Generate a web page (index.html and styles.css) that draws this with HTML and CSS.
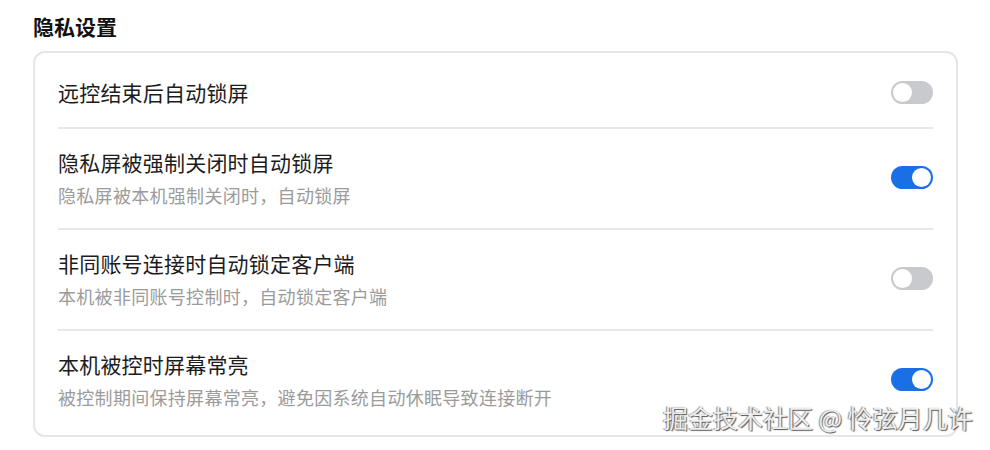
FILE: index.html
```html
<!DOCTYPE html>
<html lang="zh-CN">
<head>
<meta charset="utf-8">
<title>隐私设置</title>
<link rel="stylesheet" href="styles.css">
</head>
<body>
<div class="page">
  <h2 class="section-title">隐私设置</h2>
  <div class="card">
    <div class="row">
      <div class="texts">
        <div class="row-title">远控结束后自动锁屏</div>
      </div>
      <span class="switch"><span class="knob"></span></span>
    </div>
    <div class="row">
      <div class="texts">
        <div class="row-title">隐私屏被强制关闭时自动锁屏</div>
        <div class="row-desc">隐私屏被本机强制关闭时，自动锁屏</div>
      </div>
      <span class="switch on"><span class="knob"></span></span>
    </div>
    <div class="row">
      <div class="texts">
        <div class="row-title">非同账号连接时自动锁定客户端</div>
        <div class="row-desc">本机被非同账号控制时，自动锁定客户端</div>
      </div>
      <span class="switch"><span class="knob"></span></span>
    </div>
    <div class="row">
      <div class="texts">
        <div class="row-title">本机被控时屏幕常亮</div>
        <div class="row-desc">被控制期间保持屏幕常亮，避免因系统自动休眠导致连接断开</div>
      </div>
      <span class="switch on"><span class="knob"></span></span>
    </div>
  </div>
  <div class="watermark">掘金技术社区 @ 怜弦月几许</div>
</div>
</body>
</html>
```
FILE: styles.css
```css
* { box-sizing: border-box; }
html, body {
  margin: 0;
  background: #ffffff;
}
body {
  font-family: "Noto Sans CJK SC", "Noto Sans", sans-serif;
  color: #1e1e1e;
}
.page {
  position: relative;
  width: 990px;
  height: 450px;
  padding: 11px 32px 0 33px;
}
.section-title {
  margin: 0 0 10px;
  font-size: 21px;
  line-height: 30px;
  font-weight: 700;
  color: #111;
}
.card {
  border: 2px solid #e6e6e6;
  border-radius: 12px;
  padding: 6px 23px 5px;
  background: #fff;
}
.row {
  display: flex;
  align-items: center;
  justify-content: space-between;
  padding: 18px 0 20px;
  border-bottom: 2px solid #e8e8e8;
}
.row:last-child { border-bottom: none; }
.row-title {
  font-size: 21px;
  line-height: 30px;
  letter-spacing: 0.2px;
  color: #1c1c1c;
}
.row-desc {
  margin-top: 5px;
  font-size: 18px;
  line-height: 26px;
  letter-spacing: 0.3px;
  color: #9b9b9b;
}
.switch {
  position: relative;
  flex: none;
  width: 42px;
  height: 23px;
  border-radius: 12px;
  background: #c9cacd;
}
.switch .knob {
  position: absolute;
  top: 2px;
  left: 2px;
  width: 19px;
  height: 19px;
  border-radius: 50%;
  background: #fff;
}
.switch.on { background: #1a6fe6; }
.switch.on .knob { left: 21px; }
.watermark {
  position: absolute;
  left: 663px;
  top: 400px;
  font-size: 25px;
  line-height: 34px;
  color: #eeeeee;
  text-shadow: 1px 1px 1px #555, -1px 0 1px #888;
  white-space: nowrap;
}
```
